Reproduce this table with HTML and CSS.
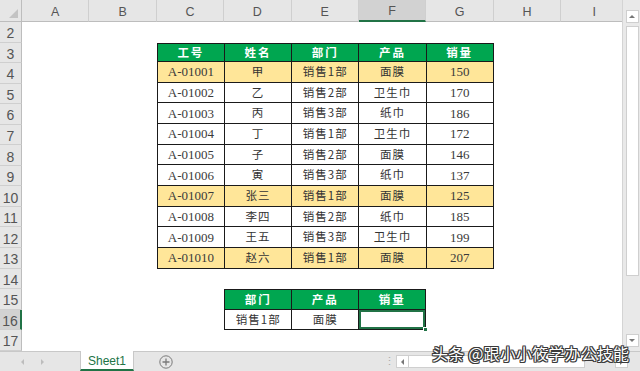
FILE: index.html
```html
<!DOCTYPE html>
<html lang="zh">
<head>
<meta charset="utf-8">
<link rel="stylesheet" href="styles.css">
</head>
<body>
<div class="app">
  <div class="main">
    <div class="sheet">
      <div class="corner"><span class="tri"></span></div>
      <div class="ch">A</div><div class="ch">B</div><div class="ch">C</div><div class="ch">D</div><div class="ch">E</div><div class="ch ch-sel">F</div><div class="ch">G</div><div class="ch">H</div><div class="ch">I</div>
      <div class="rh r2">2</div><div class="rh r3">3</div><div class="rh r4">4</div><div class="rh r5">5</div><div class="rh r6">6</div><div class="rh r7">7</div><div class="rh r8">8</div><div class="rh r9">9</div><div class="rh r10">10</div><div class="rh r11">11</div><div class="rh r12">12</div><div class="rh r13">13</div><div class="rh r14">14</div><div class="rh r15">15</div><div class="rh rh-sel r16">16</div><div class="rh r17">17</div>

      <div class="tbl1">
        <table class="data">
          <tr class="hd"><td>工号</td><td>姓名</td><td>部门</td><td>产品</td><td>销量</td></tr>
          <tr class="hl"><td class="num">A-01001</td><td>甲</td><td>销售1部</td><td>面膜</td><td class="num">150</td></tr>
          <tr><td class="num">A-01002</td><td>乙</td><td>销售2部</td><td>卫生巾</td><td class="num">170</td></tr>
          <tr><td class="num">A-01003</td><td>丙</td><td>销售3部</td><td>纸巾</td><td class="num">186</td></tr>
          <tr><td class="num">A-01004</td><td>丁</td><td>销售1部</td><td>卫生巾</td><td class="num">172</td></tr>
          <tr><td class="num">A-01005</td><td>子</td><td>销售2部</td><td>面膜</td><td class="num">146</td></tr>
          <tr><td class="num">A-01006</td><td>寅</td><td>销售3部</td><td>纸巾</td><td class="num">137</td></tr>
          <tr class="hl"><td class="num">A-01007</td><td>张三</td><td>销售1部</td><td>面膜</td><td class="num">125</td></tr>
          <tr><td class="num">A-01008</td><td>李四</td><td>销售2部</td><td>纸巾</td><td class="num">185</td></tr>
          <tr><td class="num">A-01009</td><td>王五</td><td>销售3部</td><td>卫生巾</td><td class="num">199</td></tr>
          <tr class="hl"><td class="num">A-01010</td><td>赵六</td><td>销售1部</td><td>面膜</td><td class="num">207</td></tr>
        </table>
      </div>

      <div class="tbl2">
        <table class="data">
          <tr class="hd"><td>部门</td><td>产品</td><td>销量</td></tr>
          <tr><td>销售1部</td><td>面膜</td><td class="sel"><span class="handle"></span></td></tr>
        </table>
      </div>
    </div>
    <div class="vscroll">
      <div class="vbtn"><span class="up"></span></div>
      <div class="vthumb"></div>
      <div class="vgap"></div>
      <div class="vbtn"><span class="down"></span></div>
    </div>
  </div>
  <div class="tabbar">
    <div class="nav"><span class="navl"></span><span class="navr"></span></div>
    <div class="tab">Sheet1</div>
    <div class="add">
      <svg width="14" height="14" viewBox="0 0 14 14"><circle cx="7" cy="7" r="6.2" fill="none" stroke="#7a7a7a" stroke-width="1"/><path d="M7 3.5v7M3.5 7h7" stroke="#7a7a7a" stroke-width="1.3"/></svg>
    </div>
    <div class="spacer"></div>
    <div class="dots">⋮</div>
    <div class="hscroll">
      <div class="hbtn"><span class="left"></span></div>
      <div class="hthumb"></div>
      <div class="hgap"></div>
      <div class="hbtn"><span class="right"></span></div>
    </div>
  </div>
  <div class="watermark">头条 @跟小小筱学办公技能</div>
</div>
</body>
</html>
```

FILE: styles.css
```css
* { box-sizing: border-box; }
html, body { margin: 0; padding: 0; background: #fff; }
.app {
  position: relative;
  width: 640px;
  height: 371px;
  overflow: hidden;
  display: flex;
  flex-direction: column;
  font-family: "Liberation Sans", "Noto Sans CJK SC", sans-serif;
}
.main { display: flex; height: 351px; }
.sheet {
  width: 622px;
  height: 351px;
  overflow: hidden;
  display: grid;
  grid-template-columns: 22px repeat(9, 67.4px);
  grid-template-rows: 22px repeat(16, 20.56px);
  background: #fff;
}
.corner {
  background: #e6e6e6;
  border-right: 1px solid #bdbdbd;
  border-bottom: 1px solid #bdbdbd;
  position: relative;
}
.tri {
  position: absolute;
  right: 3px; bottom: 3px;
  width: 0; height: 0;
  border-left: 9px solid transparent;
  border-bottom: 9px solid #c3c3c3;
}
.ch {
  background: #e6e6e6;
  border-right: 1px solid #cfcfcf;
  border-bottom: 1px solid #bdbdbd;
  color: #555;
  font-size: 12.5px;
  display: flex;
  align-items: center;
  justify-content: center;
  padding-top: 2px;
}
.ch-sel { background: #d2d2d2; border-bottom: 2px solid #217346; }
.rh {
  grid-column: 1;
  background: #e6e6e6;
  border-right: 1px solid #bdbdbd;
  border-bottom: 1px solid #cfcfcf;
  color: #555;
  font-size: 14px;
  display: flex;
  align-items: center;
  justify-content: center;
  padding-top: 3px;
}
.r2 { grid-row: 2; } .r3 { grid-row: 3; } .r4 { grid-row: 4; } .r5 { grid-row: 5; }
.r6 { grid-row: 6; } .r7 { grid-row: 7; } .r8 { grid-row: 8; } .r9 { grid-row: 9; }
.r10 { grid-row: 10; } .r11 { grid-row: 11; } .r12 { grid-row: 12; } .r13 { grid-row: 13; }
.r14 { grid-row: 14; } .r15 { grid-row: 15; } .r16 { grid-row: 16; } .r17 { grid-row: 17; }
.rh-sel { background: #d2d2d2; border-right: 2px solid #217346; }

.tbl1 { grid-column: 4 / 9; grid-row: 3 / 14; }
.tbl2 { grid-column: 5 / 8; grid-row: 15 / 17; }
.data {
  width: 100%;
  height: 100%;
  border-collapse: collapse;
  table-layout: fixed;
}
.data td {
  border: 1px solid #1a1a1a;
  padding: 0;
  text-align: center;
  vertical-align: middle;
  font-family: "Noto Sans CJK SC", sans-serif;
  font-size: 11.5px;
  color: #333;
  line-height: 1;
  letter-spacing: 1px;
}
.data td.num {
  font-family: "Liberation Serif", "Noto Sans CJK SC", serif;
  font-size: 13px;
  letter-spacing: 0;
  color: #3a3a3a;
}
.data tr.hd td {
  background: #00a650;
  color: #fff;
  font-weight: bold;
  letter-spacing: 2px;
}
.data tr.hl td { background: #ffe699; }
.data td.sel {
  position: relative;
  box-shadow: inset 0 0 0 2px #217346;
}
.handle {
  position: absolute;
  right: -3px;
  bottom: -3px;
  width: 5px;
  height: 5px;
  background: #217346;
  border: 1px solid #fff;
}

.vscroll {
  width: 18px;
  background: #e9e9e9;
  border-left: 1px solid #d4d4d4;
  display: flex;
  flex-direction: column;
  align-items: center;
  padding: 10px 0 4px 1px;
  gap: 3px;
}
.vbtn {
  width: 13px;
  height: 13px;
  background: #fff;
  border: 1px solid #cfcfcf;
  display: flex;
  align-items: center;
  justify-content: center;
}
.up { width: 0; height: 0; border-left: 3px solid transparent; border-right: 3px solid transparent; border-bottom: 3px solid #777; }
.down { width: 0; height: 0; border-left: 3px solid transparent; border-right: 3px solid transparent; border-top: 3px solid #777; }
.vthumb {
  width: 13px;
  height: 250px;
  background: #fff;
  border: 1px solid #cfcfcf;
}
.vgap { flex: 1; }

.tabbar {
  height: 20px;
  background: #e6e6e6;
  border-top: 1px solid #c8c8c8;
  display: flex;
  align-items: stretch;
}
.nav { width: 80px; display: flex; align-items: center; padding-left: 21px; gap: 17px; }
.navl { width: 0; height: 0; border-top: 3px solid transparent; border-bottom: 3px solid transparent; border-right: 3px solid #bdbdbd; }
.navr { width: 0; height: 0; border-top: 3px solid transparent; border-bottom: 3px solid transparent; border-left: 3px solid #bdbdbd; }
.tab {
  width: 54px;
  background: #fff;
  color: #217346;
  font-size: 12px;
  display: flex;
  align-items: center;
  justify-content: center;
  border-bottom: 2px solid #217346;
  border-left: 1px solid #c8c8c8;
  border-right: 1px solid #c8c8c8;
  margin-top: -1px;
  padding-top: 1px;
}
.add { width: 64px; display: flex; align-items: center; justify-content: center; }
.spacer { flex: 1; }
.dots { width: 14px; color: #aaa; font-size: 11px; display: flex; align-items: center; justify-content: center; }
.hscroll { width: 244px; display: flex; align-items: center; gap: 0; padding-right: 12px; }
.hbtn {
  width: 13px;
  height: 13px;
  background: #fff;
  border: 1px solid #cfcfcf;
  display: flex;
  align-items: center;
  justify-content: center;
}
.left { width: 0; height: 0; border-top: 3px solid transparent; border-bottom: 3px solid transparent; border-right: 3px solid #777; }
.right { width: 0; height: 0; border-top: 3px solid transparent; border-bottom: 3px solid transparent; border-left: 3px solid #777; }
.hthumb { width: 176px; height: 13px; background: #fff; border: 1px solid #cfcfcf; border-left: 0; }
.hgap { flex: 1; }

.watermark {
  position: absolute;
  left: 432px;
  top: 341px;
  font-family: "Noto Sans CJK SC", sans-serif;
  font-size: 16px;
  color: #fff;
  white-space: nowrap;
  letter-spacing: 0.2px;
  text-shadow: 1px 0 0 #3a3a3a, -1px 0 0 #3a3a3a, 0 1px 0 #3a3a3a, 0 -1px 0 #3a3a3a, 1px 1px 0 #3a3a3a, -1px -1px 0 #3a3a3a, 1px -1px 0 #3a3a3a, -1px 1px 0 #3a3a3a;
}
```
